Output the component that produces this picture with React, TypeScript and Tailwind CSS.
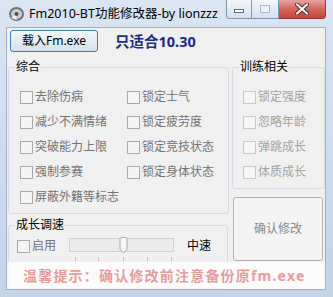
import React from "react";

function Check({ label, light }: { label: string; light?: boolean }) {
  return (
    <div className="flex h-[16px] items-center gap-[2px]">
      <span
        className={`block h-[13px] w-[13px] border ${
          light ? "border-[#c9c9c9] bg-[#f6f6f6]" : "border-[#a9a9a9] bg-[#f5f5f5]"
        }`}
      />
      <span className={light ? "text-[#a3a3a3]" : "text-[#737373]"}>{label}</span>
    </div>
  );
}

function Group({
  title,
  className,
  children,
}: {
  title: string;
  className: string;
  children?: React.ReactNode;
}) {
  return (
    <div className={`relative rounded-[3px] border border-[#d5dbe0] ${className}`}>
      <span className="absolute -top-[9px] left-[6px] bg-[#f0f0f0] px-[1px] leading-[16px] text-black">
        {title}
      </span>
      {children}
    </div>
  );
}

function TitleBar() {
  return (
    <div className="flex h-[27px] shrink-0 items-start">
      {/* app icon */}
      <svg width="17" height="17" viewBox="0 0 17 17" className="ml-[8px] mt-[5px]">
        <ellipse cx="8.5" cy="9" rx="7.5" ry="7" fill="#6e7276" />
        <ellipse cx="8.5" cy="9" rx="5.5" ry="5" fill="#c9ccd0" />
        <circle cx="8.5" cy="9" r="2" fill="#4a4e52" />
        <path d="M3 13 L7 10 L9 15 Z" fill="#f2f2f2" />
      </svg>
      <span className="ml-[4px] mt-[6px] text-[12.5px] leading-[16px] text-black">
        Fm2010-BT功能修改器-by lionzzz
      </span>
      <div className="ml-auto mr-[7px] flex h-[19px]">
        <div className="flex w-[26px] items-center justify-center rounded-bl-[4px] border border-t-0 border-[#8496ad] bg-gradient-to-b from-[#f4f7fb] to-[#d5e0ec]">
          <span className="mt-[4px] block h-[4px] w-[10px] border border-[#5e6e82] bg-white" />
        </div>
        <div className="flex w-[27px] items-center justify-center border border-l-0 border-t-0 border-[#8496ad] bg-gradient-to-b from-[#f4f7fb] to-[#d5e0ec]">
          <span className="block h-[8px] w-[10px] border border-[#a9b6c6] bg-[#eef2f7]" />
        </div>
        <div className="flex w-[47px] items-center justify-center rounded-br-[4px] border border-l-0 border-t-0 border-[#8d3a36] bg-gradient-to-b from-[#e6a39c] via-[#d3655c] to-[#c4443a]">
          <svg width="14" height="12" viewBox="0 0 14 12">
            <path d="M2 1.5 L12 10.5 M12 1.5 L2 10.5" stroke="#5a2420" strokeWidth="4" strokeLinecap="round" />
            <path d="M2 1.5 L12 10.5 M12 1.5 L2 10.5" stroke="#ffffff" strokeWidth="2.2" strokeLinecap="round" />
          </svg>
        </div>
      </div>
    </div>
  );
}

function Slider() {
  const ticks = [5, 28, 53, 77, 101];
  return (
    <div className="relative ml-[13px] h-[14px] w-[105px] border border-[#cfd3d6] bg-[#e9ebec]">
      <svg width="9" height="17" viewBox="0 0 9 17" className="absolute left-[49px] -top-[2px]">
        <path d="M1 2 Q1 0.5 2.5 0.5 L6.5 0.5 Q8 0.5 8 2 L8 12 L4.5 16 L1 12 Z" fill="#f7f7f7" stroke="#a8a8a8" />
      </svg>
      {ticks.map((t) => (
        <span
          key={t}
          className="absolute top-[18px] block h-[4px] w-[1px] bg-[#c4c4c4]"
          style={{ left: t }}
        />
      ))}
    </div>
  );
}

export default function App() {
  return (
    <div className="flex h-[297px] w-[333px] flex-col bg-gradient-to-b from-[#d9e5f2] to-[#c3d4e8] font-['Noto_Sans','Noto_Sans_CJK_SC',sans-serif] text-[12px]">
      <TitleBar />

      {/* client area */}
      <div className="relative ml-[6px] h-[263px] w-[320px] border border-[#9fb0c4] bg-[#f0f0f0]">
        <div className="ml-[3px] mt-[2px] flex items-center">
          <button className="h-[22px] w-[88px] rounded-[3px] border border-[#3e7bad] bg-gradient-to-b from-[#f3f8fb] via-[#e3edf4] to-[#d2e0eb] text-[12px] leading-none text-black">
            载入Fm.exe
          </button>
          <span className="ml-[17px] text-[14.5px] font-bold leading-none text-[#1c2a8a]">只适合10.30</span>
        </div>

        <div className="ml-[1px] mt-[15px] flex gap-[3px]">
          <div className="flex flex-col">
            <Group title="综合" className="h-[147px] w-[221px] pl-[11px] pt-[21px]">
              <div className="grid grid-cols-[107px_1fr] gap-y-[9px]">
                <Check label="去除伤病" />
                <Check label="锁定士气" />
                <Check label="减少不满情绪" />
                <Check label="锁定疲劳度" />
                <Check label="突破能力上限" />
                <Check label="锁定竞技状态" />
                <Check label="强制参赛" />
                <Check label="锁定身体状态" />
                <Check label="屏蔽外籍等标志" />
              </div>
            </Group>
            <Group title="成长调速" className="mt-[11px] h-[64px] w-[220px] pl-[8px] pt-[12px]">
              <div className="flex items-start">
                <Check label="启用" />
                <Slider />
                <span className="ml-[13px] leading-[16px] text-black">中速</span>
              </div>
            </Group>
          </div>

          <div className="flex flex-col">
            <Group title="训练相关" className="h-[122px] w-[93px] pl-[10px] pt-[21px]">
              <div className="flex flex-col gap-[9px]">
                <Check label="锁定强度" light />
                <Check label="忽略年龄" light />
                <Check label="弹跳成长" light />
                <Check label="体质成长" light />
              </div>
            </Group>
            <button className="ml-[1px] mt-[8px] h-[64px] w-[90px] rounded-[3px] border border-[#b3b3b3] bg-[#f4f4f4] text-[12px] text-[#8a8a8a]">
              确认修改
            </button>
          </div>
        </div>

        {/* warning overlay */}
        <div className="absolute left-0 right-0 top-[234px] flex h-[27px] items-center bg-white/80 pl-[16px]">
          <span className="text-[14px] font-bold leading-none tracking-[1.2px] text-[#e89c9c]">
            温馨提示：确认修改前注意备份原fm.exe
          </span>
        </div>
      </div>
    </div>
  );
}
